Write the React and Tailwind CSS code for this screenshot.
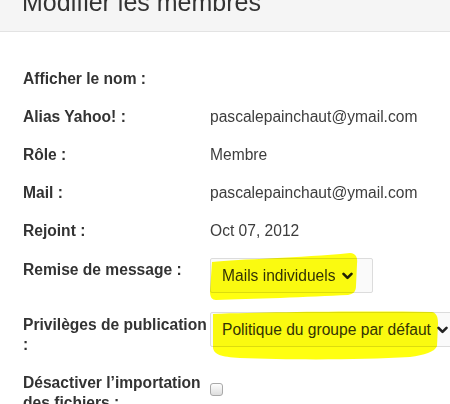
import { Fragment } from 'react'

// lignes simples du formulaire
const infos = [
  { label: 'Afficher le nom :', value: '' },
  { label: 'Alias Yahoo! :', value: 'pascalepainchaut@ymail.com' },
  { label: 'Rôle :', value: 'Membre' },
  { label: 'Mail :', value: 'pascalepainchaut@ymail.com' },
  { label: 'Rejoint :', value: 'Oct 07, 2012' },
]

function Chevron() {
  return (
    <svg width="11" height="8" viewBox="0 0 11 8" className="shrink-0">
      <path d="M1.5 1.8 L5.5 5.8 L9.5 1.8" fill="none" stroke="#222" strokeWidth="2.6" strokeLinecap="round" strokeLinejoin="round" />
    </svg>
  )
}

// trait de surligneur jaune (posé par dessus)
function Surligne({ d, className }) {
  return (
    <svg className={`absolute pointer-events-none mix-blend-multiply ${className}`} viewBox="0 0 240 60" width="240" height="60">
      <path d={d} fill="#ffff10" />
    </svg>
  )
}

export default function App() {
  return (
    <div className="w-[450px] h-[404px] overflow-hidden bg-white text-[#333] font-['Liberation_Sans',Arial,sans-serif]">
      {/* En-tête */}
      <div className="h-[32px] bg-[#f5f5f5] border-b border-[#e3e3e3] overflow-hidden">
        <h1 className="mt-[-10px] pl-[22px] text-[25px] leading-[25px] font-normal text-[#333] whitespace-nowrap">Modifier les membres</h1>
      </div>

      <div className="pl-[23px] pt-[37px] text-[15.6px] leading-[20px]">
        {infos.map((row, i) => (
          <div key={row.label} className={`flex ${i > 0 ? 'mt-[18px]' : ''}`}>
            <div className="w-[187px] shrink-0 font-bold">{row.label}</div>
            <div className="text-[#3d3d3d] whitespace-nowrap">{row.value}</div>
          </div>
        ))}

        {/* Remise de message */}
        <div className="flex mt-[17px]">
          <div className="w-[187px] shrink-0 font-bold pt-[2px]">Remise de message :</div>
          <div className="relative">
            <div className="w-[163px] h-[35px] border border-[#dcdcdc] rounded-[2px] bg-[#fafafa] flex items-center pl-[11px] gap-[6px] text-[#333]">
              <span className="whitespace-nowrap">Mails individuels</span>
              <Chevron />
            </div>
            <Surligne
              className="left-0 top-[-6px]"
              d="M2 10 C30 7 90 6 140 1 C146 1 148 6 147 12 L146 34 C146 40 143 42 138 43 C100 45 40 47 6 48 C2 48 0 45 0 40 Z"
            />
          </div>
        </div>

        {/* Privilèges de publication */}
        <div className="flex mt-[19px]">
          <div className="w-[187px] shrink-0 font-bold pt-[3px]">
            <span className="whitespace-nowrap">Privilèges de publication</span> :
          </div>
          <div className="relative">
            <div className="w-[260px] h-[35px] border border-[#dcdcdc] rounded-[2px] bg-[#fafafa] flex items-center pl-[11px] gap-[6px] text-[#333]">
              <span className="whitespace-nowrap">Politique du groupe par défaut</span>
              <Chevron />
            </div>
            <Surligne
              className="left-0 top-[-2px]"
              d="M3 4 C60 2 150 1 222 2 C227 3 228 8 228 14 L227 36 C225 42 214 45 200 47 C150 50 80 50 30 48 C10 47 4 44 3 38 Z"
            />
          </div>
        </div>

        {/* Désactiver l'importation */}
        <div className="flex mt-[18px]">
          <div className="w-[187px] shrink-0 font-bold">
            <span className="whitespace-nowrap">Désactiver l’importation</span> des fichiers :
          </div>
          <div className="pt-[8px]">
            <input type="checkbox" className="w-[13px] h-[13px] m-0 appearance-none rounded-[3px] border border-[#a9a9a9] bg-gradient-to-b from-[#fdfdfd] to-[#dedede]" />
          </div>
        </div>
      </div>
    </div>
  )
}
